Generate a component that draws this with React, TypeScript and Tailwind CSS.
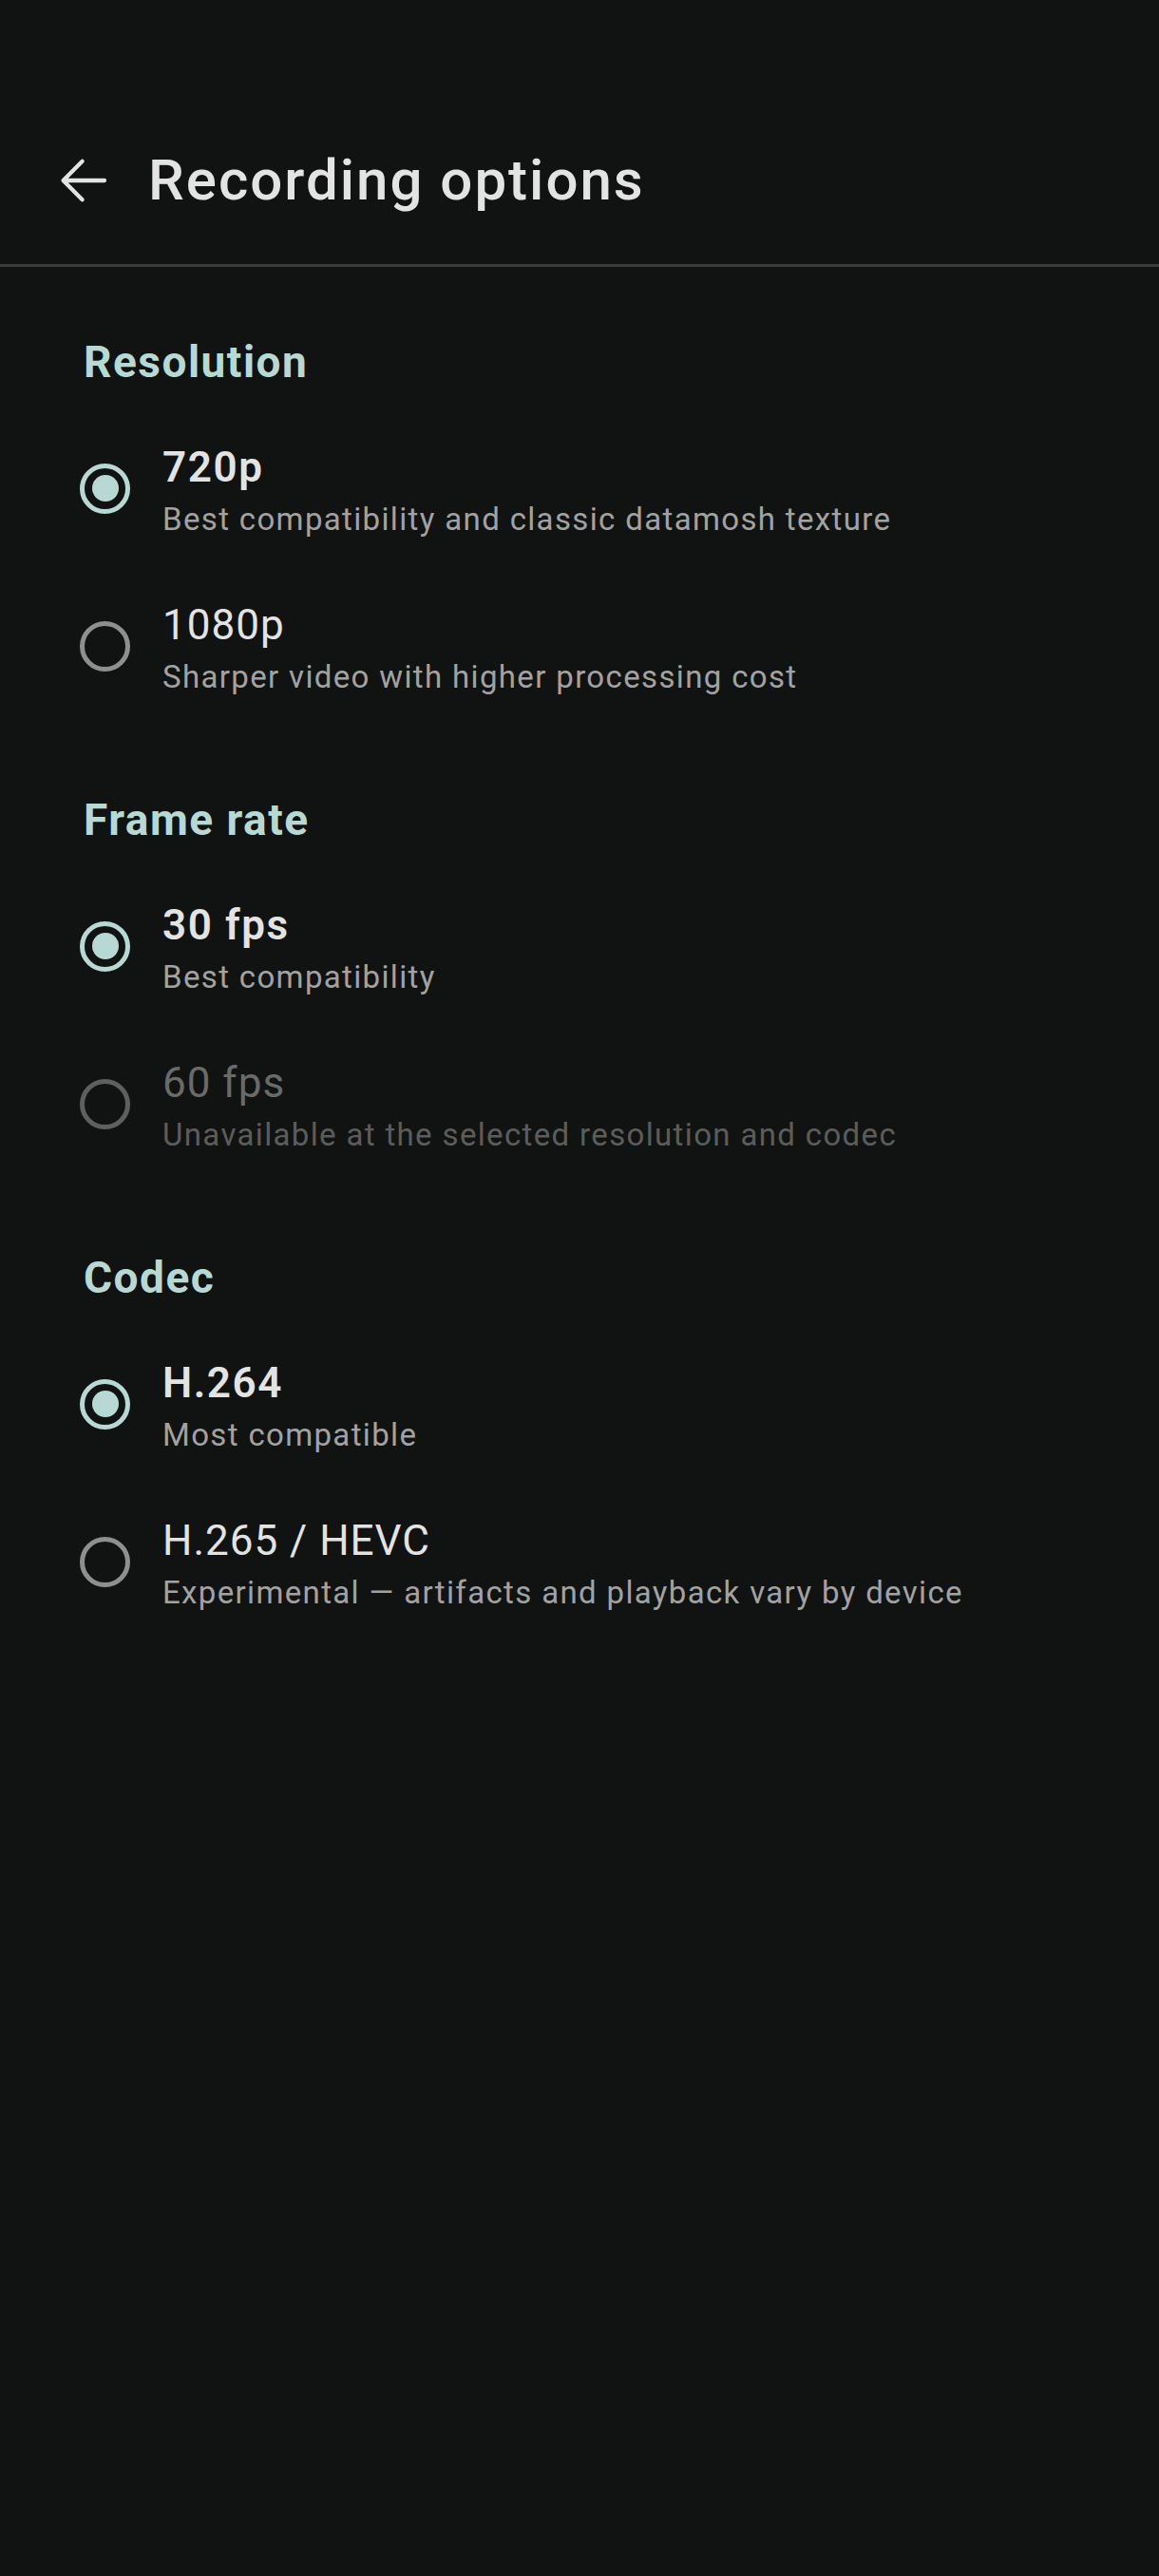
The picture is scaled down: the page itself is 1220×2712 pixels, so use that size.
import React from "react";

type Option = {
  label: string;
  hint: string;
  selected?: boolean;
  disabled?: boolean;
};

const sections: { title: string; options: Option[] }[] = [
  {
    title: "Resolution",
    options: [
      { label: "720p", hint: "Best compatibility and classic datamosh texture", selected: true },
      { label: "1080p", hint: "Sharper video with higher processing cost" },
    ],
  },
  {
    title: "Frame rate",
    options: [
      { label: "30 fps", hint: "Best compatibility", selected: true },
      { label: "60 fps", hint: "Unavailable at the selected resolution and codec", disabled: true },
    ],
  },
  {
    title: "Codec",
    options: [
      { label: "H.264", hint: "Most compatible", selected: true },
      { label: "H.265 / HEVC", hint: "Experimental — artifacts and playback vary by device" },
    ],
  },
];

const Radio = ({ selected, disabled }: { selected?: boolean; disabled?: boolean }) => {
  if (selected) {
    return (
      <div className="flex h-[53px] w-[53px] shrink-0 items-center justify-center rounded-full border-[5px] border-[#b8d9d3]">
        <div className="h-[28px] w-[28px] rounded-full bg-[#b8d9d3]" />
      </div>
    );
  }
  return (
    <div
      className={
        disabled
          ? "h-[53px] w-[53px] shrink-0 rounded-full border-[5px] border-[#5f5f5f]"
          : "h-[53px] w-[53px] shrink-0 rounded-full border-[5px] border-[#8f8f8f]"
      }
    />
  );
};

const OptionRow = ({ option }: { option: Option }) => {
  const titleColor = option.disabled ? "text-[#6a6a6a]" : "text-[#e3e3e3]";
  const hintColor = option.disabled ? "text-[#5c5c5c]" : "text-[#a2a2a2]";
  return (
    <div className="flex h-[166px] items-center pl-[84px]">
      <Radio selected={option.selected} disabled={option.disabled} />
      <div className="ml-[34px] flex flex-col">
        <span
          className={`h-[66px] text-[44px] leading-[66px] ${titleColor} ${
            option.selected ? "font-semibold tracking-[1.6px]" : "font-normal tracking-[1px]"
          }`}
        >
          {option.label}
        </span>
        <span className={`h-[44px] text-[33px] leading-[44px] tracking-[1.35px] ${hintColor}`}>
          {option.hint}
        </span>
      </div>
    </div>
  );
};

export default function App() {
  return (
    <div
      className="min-h-[2712px] w-[1220px] bg-[#111312] pt-[102px]"
      style={{ fontFamily: "Roboto, 'Noto Sans', sans-serif" }}
    >
      {/* Top app bar */}
      <header className="flex h-[176px] items-center">
        <div className="ml-[55px] flex h-[66px] w-[66px] items-center justify-center">
          <svg width="66" height="66" viewBox="0 0 24 24" fill="none">
            <path
              d="M20 12H4.3M11.5 4.6L4.2 12l7.3 7.4"
              stroke="#e3e3e3"
              strokeWidth="1.55"
              strokeLinecap="round"
              strokeLinejoin="round"
            />
          </svg>
        </div>
        <h1 className="ml-[35px] text-[60px] font-medium leading-none tracking-[2px] text-[#e3e3e3]">
          Recording options
        </h1>
      </header>
      <div className="h-[3px] bg-[#3a3b3b]" />

      {sections.map((section) => (
        <section key={section.title} className="pt-[70px]">
          <h2 className="mb-[20px] h-[60px] pl-[88px] text-[46px] font-bold leading-[60px] tracking-[1.5px] text-[#b8d9d3]">
            {section.title}
          </h2>
          {section.options.map((option) => (
            <OptionRow key={option.label} option={option} />
          ))}
        </section>
      ))}
    </div>
  );
}
